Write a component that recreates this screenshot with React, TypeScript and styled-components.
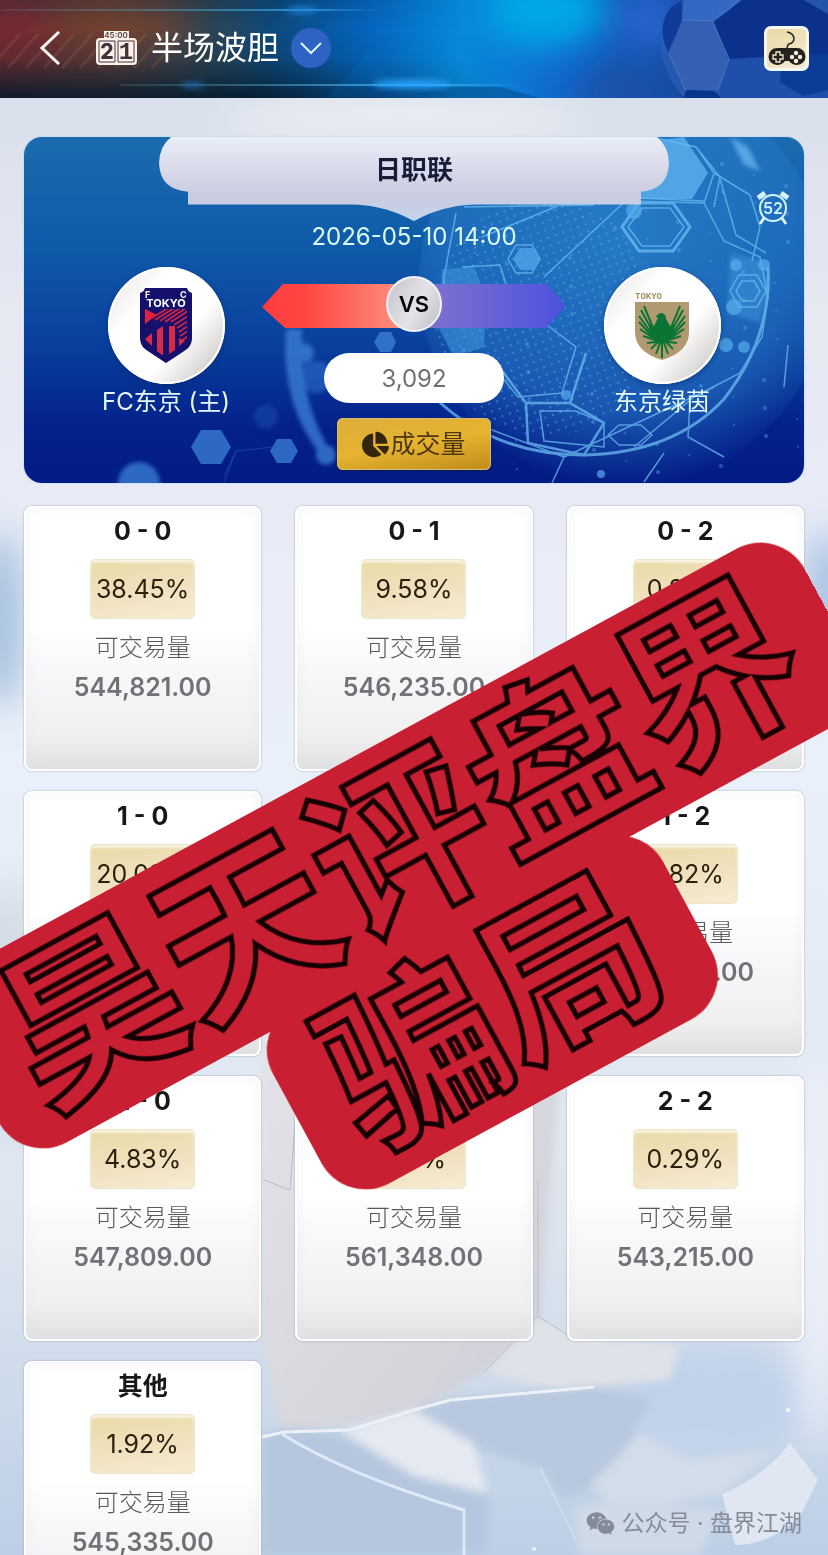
import React from "react";
import styled, { createGlobalStyle } from "styled-components";
import { FaChartPie, FaWeixin } from "react-icons/fa";

const GlobalStyle = createGlobalStyle`
  * { box-sizing: border-box; }
  body {
    margin: 0;
    font-family: Inter, "Noto Sans CJK SC", sans-serif;
    color: #17181c;
  }
  button { font-family: inherit; border: 0; padding: 0; margin: 0; cursor: pointer; }
`;

const Screen = styled.div`
  position: relative;
  display: flex;
  flex-direction: column;
  height: 100vh;
  overflow: hidden;
  background: #e3e9f4;
`;

const Backdrop = styled.svg`
  position: absolute;
  inset: 0;
  width: 100%;
  height: 100%;
`;

const Header = styled.header`
  position: relative;
  flex: none;
  height: 98px;
  background: linear-gradient(90deg, #6b2c30 0%, #5d3f3a 14%, #35454f 24%, #0d4a7d 33%, #0564bd 44%, #088bdb 56%, #1268cc 68%, #14479f 84%, #0b3a8c 100%);
`;

const HeaderRow = styled.div`
  position: relative;
  display: flex;
  align-items: center;
  height: 96px;
  padding: 0 19px 0 39px;
`;

const BackButton = styled.button`
  display: flex;
  margin-right: 35px;
  background: none;
`;

const Title = styled.h1`
  margin: 0 12px 0 14px;
  color: #fff;
  font-size: 32px;
  line-height: 40px;
  font-weight: 400;
`;

const DropButton = styled.button`
  display: flex;
  align-items: center;
  justify-content: center;
  width: 40px;
  height: 40px;
  border-radius: 50%;
  background: #2f63c3;
`;

const GameButton = styled.button`
  display: flex;
  margin-left: auto;
  width: 45px;
  height: 45px;
  border: 3px solid #f3f8f4;
  border-radius: 7px;
  background: linear-gradient(150deg, #ead9a6, #f5ecd2);
`;

const Main = styled.main`
  position: relative;
  flex: 1;
  min-height: 0;
  overflow-y: auto;
  scrollbar-width: none;
  padding: 39px 24px 24px;
`;

const Hero = styled.section`
  position: relative;
  height: 346px;
  border-radius: 18px;
  overflow: hidden;
  background: linear-gradient(180deg, #1b6bae 0%, #0f5aa9 32%, #093f9d 60%, #04218b 84%, #021b84 100%);
  box-shadow: 0 0 2px #9ccdf5;
`;

const Banner = styled.div`
  position: relative;
  display: flex;
  justify-content: center;
  width: 510px;
  max-width: 100%;
  height: 84px;
  margin: 0 auto;
`;

const League = styled.h2`
  position: relative;
  margin: 0;
  padding-top: 13px;
  font-size: 26px;
  line-height: 40px;
  font-weight: 700;
  color: #171d38;
`;

const Kickoff = styled.time`
  position: relative;
  display: block;
  text-align: center;
  font-size: 24px;
  line-height: 32px;
  color: #d9fbff;
`;

const Timer = styled.svg`
  position: absolute;
  top: 52px;
  right: 14px;
`;

const Match = styled.div`
  position: relative;
  display: grid;
  grid-template-columns: 192px 1fr 192px;
  padding: 14px 46px 0;
`;

const Team = styled.div`
  display: flex;
  flex-direction: column;
  align-items: center;
`;

const Crest = styled.div`
  display: flex;
  justify-content: center;
  align-items: center;
  width: 117px;
  height: 117px;
  border-radius: 50%;
  background: linear-gradient(130deg, #e9e8e6 8%, #fff 30%, #fff 62%, #d8d5d2 85%, #fff 100%);
  box-shadow: inset 0 0 0 2px #fff, 0 2px 6px #062a6b88;
`;

const TeamName = styled.div`
  font-size: 24px;
  line-height: 36px;
  color: #e6fbff;
  white-space: nowrap;
`;

const Centre = styled.div`
  display: flex;
  flex-direction: column;
  align-items: center;
`;

const Versus = styled.div`
  position: relative;
  display: flex;
  justify-content: center;
  align-items: center;
  width: 100%;
  height: 56px;
  margin-top: 9px;
`;

const Arrows = styled.svg`
  position: absolute;
  inset: 8px 0 auto;
  width: 100%;
  height: 44px;
`;

const VersusDisc = styled.div`
  position: relative;
  width: 56px;
  height: 56px;
  border: 2px solid #f3f3f8;
  border-radius: 50%;
  background: linear-gradient(120deg, #c5c4ca, #e4e3e8 55%, #bebdc8);
  font-size: 22px;
  line-height: 52px;
  font-weight: 600;
  text-align: center;
  color: #050505;
`;

const Total = styled.output`
  width: 180px;
  height: 50px;
  margin-top: 21px;
  border-radius: 25px;
  background: #fff;
  font-size: 24px;
  line-height: 52px;
  text-align: center;
  color: #6f7176;
`;

const VolumeButton = styled.button`
  display: flex;
  align-items: center;
  justify-content: center;
  gap: 1px;
  width: 154px;
  height: 52px;
  margin-top: 15px;
  border-radius: 6px;
  background: linear-gradient(170deg, #dcae3c, #e6b32f 50%, #c08b1a);
  box-shadow: inset 0 0 0 1px #d9bb70, 0 1px 3px #031a5a;
  font-size: 25px;
  line-height: 36px;
  color: #4c3613;
`;

const Grid = styled.div`
  display: grid;
  grid-template-columns: repeat(3, 1fr);
  column-gap: 34px;
  row-gap: 20px;
  margin-top: 23px;
`;

const Card = styled.article`
  display: flex;
  flex-direction: column;
  align-items: center;
  height: 265px;
  padding-top: 6px;
  border: 2px solid #fff;
  border-radius: 8px;
  background: linear-gradient(180deg, #fff 0%, #fff 45%, #f8f7f9 62%, #efeff0 88%, #e0e0e2 100%);
  box-shadow: 0 0 2px #8d97a8, inset 0 0 12px #dfe3e966;
`;

const Score = styled.h3`
  margin: 0;
  font-size: 25px;
  line-height: 34px;
  font-weight: 700;
  color: #17181b;
`;

const Rate = styled.button`
  width: 105px;
  height: 60px;
  margin-top: 11px;
  border: 1px solid #ece4cd;
  border-radius: 5px;
  background: linear-gradient(170deg, #eadba9 5%, #f0e1bd 50%, #f6ead0 95%);
  box-shadow: inset 0 3px 2px #f8f1de;
  font-size: 25px;
  line-height: 56px;
  color: #2c210c;
`;

const Caption = styled.div`
  margin-top: 11px;
  font-size: 24px;
  line-height: 36px;
  font-weight: 300;
  color: #58595d;
`;

const Amount = styled.div`
  margin-top: 9px;
  font-size: 25px;
  line-height: 24px;
  font-weight: 600;
  color: #717277;
`;

const Stamp = styled.div`
  position: absolute;
  left: 54%;
  top: 929px;
  display: flex;
  flex-direction: column;
  align-items: center;
  transform: translate(-50%, -50%) rotate(-28.5deg);
  pointer-events: none;
`;

const StampLine = styled.div`
  height: 202px;
  padding: 0 46px;
  border-radius: 50px;
  background: #c91f32;
  color: #c91f32;
  font-family: "Noto Sans CJK SC", sans-serif;
  font-size: 176px;
  line-height: 174px;
  font-weight: 700;
  white-space: nowrap;
  -webkit-text-stroke: 5px #160003;

  & + & { margin-top: -12px; }
`;

const Credit = styled.div`
  position: absolute;
  right: 26px;
  bottom: 16px;
  display: flex;
  align-items: center;
  gap: 6px;
  font-size: 23px;
  line-height: 32px;
  color: #858b98;
`;

const cards = [
  { score: "0 - 0", rate: "38.45%", amount: "544,821.00" },
  { score: "0 - 1", rate: "9.58%", amount: "546,235.00" },
  { score: "0 - 2", rate: "0.82%", amount: "543,215.00" },
  { score: "1 - 0", rate: "20.09%", amount: "545,335.00" },
  { score: "1 - 1", rate: "6.21%", amount: "546,235.00" },
  { score: "1 - 2", rate: "0.82%", amount: "543,215.00" },
  { score: "2 - 0", rate: "4.83%", amount: "547,809.00" },
  { score: "2 - 1", rate: "1.17%", amount: "561,348.00" },
  { score: "2 - 2", rate: "0.29%", amount: "543,215.00" },
  { score: "其他", rate: "1.92%", amount: "545,335.00" },
];

function PageArt() {
  return (
    <Backdrop viewBox="0 0 828 1555" preserveAspectRatio="xMidYMid slice" aria-hidden="true">
      <defs>
        <linearGradient id="sky" x1="0" y1="0" x2="0" y2="1">
          <stop offset="0" stopColor="#d3dce8" />
          <stop offset=".2" stopColor="#e6e8f2" />
          <stop offset=".5" stopColor="#eaf0fa" />
          <stop offset=".8" stopColor="#dce4ef" />
          <stop offset="1" stopColor="#bccfe6" />
        </linearGradient>
        <linearGradient id="shard" x1="0" y1="0" x2="1" y2="1">
          <stop offset="0" stopColor="#e4e3e8" />
          <stop offset="1" stopColor="#cdced6" />
        </linearGradient>
        <filter id="soft"><feGaussianBlur stdDeviation="18" /></filter>
        <filter id="edge"><feGaussianBlur stdDeviation="4" /></filter>
      </defs>
      <rect width="828" height="1555" fill="url(#sky)" />
      <g filter="url(#soft)">
        <ellipse cx="0" cy="620" rx="22" ry="90" fill="#9dbcda" />
        <ellipse cx="828" cy="590" rx="22" ry="60" fill="#a3bde0" />
        <ellipse cx="400" cy="118" rx="180" ry="16" fill="#eef1f6" />
        <ellipse cx="700" cy="1400" rx="130" ry="50" fill="#bfd2ea" />
        <ellipse cx="10" cy="1010" rx="30" ry="130" fill="#d2d9e3" />
        <ellipse cx="818" cy="1250" rx="20" ry="200" fill="#f1f3fa" />
      </g>
      <g filter="url(#edge)">
        <path d="M260 1030 L296 1090 L560 1070 L540 1320 L484 1372 L414 1412 L282 1434 L262 1340Z" fill="url(#shard)" />
        <path d="M262 1436 L284 1428 L340 1434 L414 1470 L490 1494 L485 1555 L262 1555Z" fill="#b4c7de" />
        <path d="M538 1316 L568 1335 L680 1345 L670 1380 L560 1390 L486 1372Z" fill="#dfe2e8" />
        <path d="M414 1410 L450 1398 L594 1386 L652 1400 L620 1460 L590 1490 L560 1500 L544 1470 L480 1450 L414 1428Z" fill="#b8c9df" />
        <path d="M340 1432 L414 1410 L474 1444 L488 1494 L414 1476Z" fill="#e5e9f2" />
        <path d="M590 1485 L640 1434 L690 1460 L775 1450 L720 1494 L620 1510Z" fill="#d3dde9" />
        <path d="M574 1508 L625 1500 L720 1510 L700 1555 L580 1555Z" fill="#d0dae7" />
      </g>
      <path d="M722 1494 Q765 1476 790 1443 L818 1480 L800 1516 Q770 1545 735 1545Z" fill="#e1e7f2" />
      <path d="M262 1437 L284 1432 L350 1430 L414 1410 L450 1400 L594 1387" fill="none" stroke="#ecf1f7" strokeWidth="3" />
      <path d="M282 1434 Q345 1474 464 1510 V1555" fill="none" stroke="#dfeaf6" strokeWidth="3" />
      <path d="M538 1180 V1316 L568 1335 M538 1316 L484 1372 M264 1180 L290 1190 L296 1110" fill="none" stroke="#b9bdca" strokeWidth="1" />
      <path d="M540 1468 L560 1508 L576 1540" fill="none" stroke="#cddcec" strokeWidth="2" />
      <circle cx="788" cy="1410" r="2" fill="#f1f8ff" />
      <circle cx="534" cy="1549" r="2" fill="#e8f3ff" />
    </Backdrop>
  );
}

function HeaderArt() {
  return (
    <Backdrop viewBox="0 0 828 98" preserveAspectRatio="xMaxYMid slice" aria-hidden="true">
      <defs>
        <linearGradient id="hshade" x1="0" y1="0" x2="0" y2="1">
          <stop offset="0" stopColor="#031c38" stopOpacity=".2" />
          <stop offset=".3" stopColor="#031c38" stopOpacity="0" />
          <stop offset=".6" stopColor="#061c30" stopOpacity=".15" />
          <stop offset="1" stopColor="#061a2c" stopOpacity=".9" />
        </linearGradient>
        <linearGradient id="fadeR"><stop offset="0" stopColor="#fff" /><stop offset=".5" stopColor="#fff" /><stop offset="1" stopColor="#000" /></linearGradient>
        <mask id="hmask"><rect width="500" height="98" fill="url(#fadeR)" /></mask>
        <linearGradient id="beam"><stop offset="0" stopColor="#5fa5a6" stopOpacity=".2" /><stop offset=".8" stopColor="#39a8ef" /><stop offset="1" stopColor="#39a8ef" stopOpacity="0" /></linearGradient>
        <filter id="hb" x="-30%" y="-60%" width="160%" height="220%"><feGaussianBlur stdDeviation="16" /></filter>
        <filter id="hs" x="-20%" y="-200%" width="140%" height="500%"><feGaussianBlur stdDeviation="3" /></filter>
      </defs>
      <g filter="url(#hb)">
        <ellipse cx="20" cy="30" rx="40" ry="20" fill="#8b2832" opacity=".6" />
        <ellipse cx="120" cy="22" rx="70" ry="18" fill="#80442c" opacity=".8" />
        <ellipse cx="545" cy="10" rx="60" ry="38" fill="#00a8e6" />
        <ellipse cx="650" cy="20" rx="30" ry="26" fill="#2a66d0" />
        <path d="M560 104 L620 64 L690 104Z" fill="#1a4fa2" />
      </g>
      <rect width="500" height="98" fill="url(#hshade)" mask="url(#hmask)" />
      <g stroke="#b16f55" strokeWidth="3" opacity=".2">
        {[0, 18, 36, 54, 72, 90, 108, 126, 144, 162].map((x) => (
          <path key={x} d={`M${x - 10} 68 L${x + 20} 34`} />
        ))}
      </g>
      <path d="M370 50 L328 97 L540 97 L500 86 L392 84Z" fill="#0b83ce" opacity=".12" />
      <path d="M340 87 H500 L540 98 H340Z" fill="#073a70" opacity=".4" />
      <rect y="9" width="384" height="2" fill="url(#beam)" opacity=".7" />
      <rect x="120" y="84" width="400" height="2" fill="url(#beam)" opacity=".9" />
      <g filter="url(#hs)">
        <ellipse cx="302" cy="10" rx="16" ry="3" fill="#2486d8" />
        <ellipse cx="193" cy="85" rx="12" ry="2" fill="#1b76c8" />
        <ellipse cx="412" cy="84" rx="40" ry="4" fill="#2aa4ff" />
      </g>
      <path d="M662 30 Q672 6 684 -6 H828 V98 H684 Q655 64 662 30Z" fill="#2a5bb2" opacity=".8" />
      <path d="M682 0 L682 22 L668 52 Q656 28 670 8Z" fill="#103b98" />
      <path d="M684 0 H746 L712 21 L682 20Z" fill="#3568c4" />
      <path d="M682 20 L712 21 L728 60 L718 90 L686 91 L669 54Z" fill="#355fb2" />
      <path d="M714 22 L744 -2 L800 -2 L828 14 V54 L776 58 L729 59Z" fill="#0b318c" />
      <path d="M686 90 L714 91 L722 98 H684Z" fill="#08348b" />
      <path d="M729 59 L782 56 L828 66 V98 H722 L718 90Z" fill="#1f4fa8" />
      <path d="M782 56 L828 54 V90 L804 96 L780 82Z" fill="#0c3b98" />
      <path d="M682 20 L712 21 L729 59 L718 90 M712 21 L738 1 M669 54 L686 91" fill="none" stroke="#4b78c0" strokeWidth="1" />
    </Backdrop>
  );
}

function hex(cx: number, cy: number, r: number, k = 1) {
  return [0, 1, 2, 3, 4, 5]
    .map((i) => `${Math.round(cx + r * Math.cos((i * Math.PI) / 3))},${Math.round(cy + k * r * Math.sin((i * Math.PI) / 3))}`)
    .join(" ");
}

function HeroArt() {
  return (
    <Backdrop viewBox="0 0 780 346" preserveAspectRatio="xMaxYMid slice" aria-hidden="true">
      <defs>
        <pattern id="dots" width="8" height="8" patternUnits="userSpaceOnUse" patternTransform="rotate(-20)">
          <circle cx="2" cy="2" r="1" fill="#6ab9f6" />
        </pattern>
        <radialGradient id="ball" cx=".5" cy=".4" r=".6">
          <stop offset="0" stopColor="#2d84cd" stopOpacity=".75" />
          <stop offset=".7" stopColor="#2675c6" stopOpacity=".6" />
          <stop offset="1" stopColor="#2675c6" stopOpacity="0" />
        </radialGradient>
        <filter id="glow"><feGaussianBlur stdDeviation="2" /></filter>
      </defs>
      <circle cx="600" cy="145" r="205" fill="url(#ball)" />
      <ellipse cx="520" cy="180" rx="110" ry="120" fill="url(#dots)" opacity=".55" />
      <path d="M630 4 L660 0 L684 36 L668 62 L606 62 Q640 30 630 4Z" fill="#5eb0ec" opacity=".8" />
      <path d="M706 0 L724 10 L736 34 L720 28Z" fill="#6ebcf2" opacity=".7" filter="url(#glow)" />
      <path d="M418 132 L450 130 L462 160 L460 210 L430 220 L414 190Z" fill="#4197df" opacity=".55" />
      <path d="M706 116 L740 124 L746 150 L736 186 L704 176Z" fill="#4ea5e8" opacity=".4" filter="url(#glow)" />
      <g fill="none" stroke="#6cbcf2" strokeWidth="1.5" opacity=".75">
        <path d="M628 0 L672 10 L690 36 L680 66 L606 64 M672 10 L696 40 L690 70 M690 36 L726 58 L736 90 L728 124" />
        <path d="M680 66 L700 104 L736 120 L744 160 L738 200 L716 236 L670 260 L610 310 M696 42 L712 98 L742 116" />
        <path d="M590 60 L680 64 M606 64 L536 68 L458 100 M610 56 L520 140 M440 70 L570 68" />
        <path d="M438 130 L476 128 L486 160 L552 210 L538 256 L494 260 L462 220 M432 76 L420 140 L418 190" />
        <path d="M468 220 L502 266 L546 266 L562 216 M502 266 L504 306 L560 318 L580 286 L546 266" strokeWidth="2.5" />
        <path d="M516 274 L552 274 L580 286 L580 310 L520 304Z" />
        <path d="M410 260 Q470 318 560 318 Q650 316 700 262 Q748 200 744 130" strokeWidth="3" />
        <path d="M460 290 L540 320 L528 346 M620 345 L640 316 M540 320 L690 250 M666 264 L664 300 L700 320 M764 208 L760 250" />
        <polygon points={hex(632, 90, 34, 0.8)} strokeWidth="3" />
        <polygon points={hex(632, 90, 28, 0.8)} />
        <polygon points={hex(724, 154, 18, 1)} />
        <polygon points={hex(724, 154, 12, 1)} />
        <polygon points={hex(606, 298, 22, 0.5)} />
        <polygon points={hex(500, 122, 16)} />
      </g>
      <g fill="#58abed" opacity=".7">
        <polygon points={hex(502, 122, 13)} />
        <circle cx="712" cy="128" r="6" /><circle cx="740" cy="128" r="6" /><circle cx="710" cy="170" r="8" />
        <circle cx="702" cy="208" r="7" /><circle cx="720" cy="210" r="6" /><circle cx="610" cy="74" r="8" />
        <circle cx="577" cy="337" r="4" /><circle cx="542" cy="258" r="5" />
      </g>
      <g fill="#5fb2f0" opacity=".4">
        {Array.from({ length: 90 }, (_, i) => (
          <circle key={i} cx={430 + ((i * 97) % 345)} cy={8 + ((i * 61) % 330)} r={1 + (i % 2)} />
        ))}
      </g>
      <g fill="#3d82da" opacity=".75">
        <polygon points={hex(187, 310, 20)} />
        <polygon points={hex(260, 314, 14)} />
        <polygon points={hex(361, 205, 11)} />
        <g filter="url(#glow)">
          <circle cx="115" cy="346" r="21" />
          <circle cx="302" cy="318" r="10" />
          <circle cx="292" cy="240" r="16" opacity=".6" />
          <circle cx="280" cy="216" r="10" />
          <circle cx="242" cy="280" r="12" opacity=".3" />
          <path d="M262 192 Q256 270 300 322 L306 314 Q274 260 278 192Z" />
        </g>
      </g>
      <path d="M200 340 L212 314 L250 310 M212 314 L200 346" stroke="#2563b7" fill="none" opacity=".5" />
    </Backdrop>
  );
}

function ScoreboardIcon() {
  return (
    <svg width="41" height="34" viewBox="0 0 41 34" aria-hidden="true">
      <path d="M8 0 H33 V7 H37 Q41 7 41 11 V30 Q41 34 37 34 H4 Q0 34 0 30 V11 Q0 7 4 7 H8Z" fill="#fdf1ea" />
      <path d="M3 10 H19 V31 H3Z M22 10 H38 V31 H22Z" fill="none" stroke="#40343a" strokeWidth="1" />
      <text x="20" y="7" textAnchor="middle" fontFamily="Inter, sans-serif" fontSize="8" fontWeight="600" fill="#544142">45:00</text>
      <text x="11" y="28" textAnchor="middle" fontFamily="Inter, sans-serif" fontSize="21" fontWeight="800" fill="#40343a">2</text>
      <text x="30" y="28" textAnchor="middle" fontFamily="Liberation Mono, monospace" fontSize="24" fontWeight="700" fill="#40343a">1</text>
    </svg>
  );
}

function GamepadIcon() {
  return (
    <svg width="39" height="39" viewBox="0 0 39 39" aria-hidden="true">
      <path d="M20 3 Q26 4 27 9 Q27 14 22 15 Q20 16 20 21" fill="none" stroke="#2a2520" strokeWidth="1.5" />
      <path d="M10 19 H30 A8 8 0 0 1 30 36 Q25 36 22 32 H18 Q15 36 10 36 A8 8 0 0 1 10 19Z" fill="#25211f" />
      <path d="M9 23 H13 V26 H16 V30 H13 V33 H9 V30 H6 V26 H9Z" fill="#25211f" stroke="#f0e8cf" strokeWidth="1.3" />
      <g fill="#f5efdc"><circle cx="29" cy="24" r="2.2" /><circle cx="29" cy="32" r="2.2" /><circle cx="25" cy="28" r="2.2" /><circle cx="33" cy="28" r="2.2" /></g>
    </svg>
  );
}

function TokyoCrest() {
  return (
    <svg width="52" height="75" viewBox="0 0 52 75" role="img" aria-label="FC东京">
      <clipPath id="inner"><path d="M5 21 H47 V54 L26 70 L5 54Z" /></clipPath>
      <path d="M5 0 H47 Q48 4 52 5 V50 Q52 57 47 61 Q40 66 26 75 Q12 66 5 61 Q0 57 0 50 V5 Q4 4 5 0Z" fill="#15106b" />
      <g clipPath="url(#inner)">
        <path d="M5 21 L17 27 L5 36Z" fill="#e3203f" />
        <g stroke="#c42545" strokeWidth="2">
          <path d="M12 30 L28 20 M15 32 L34 20 M20 33 L40 20 M25 34 L46 20 M31 34 L48 23 M34 37 L48 28 M37 40 L48 33 M39 44 L48 38 M40 48 L48 43 M41 53 L48 48" />
        </g>
        <path d="M17 42 L23 38 V68 L17 64Z M29 38 H35 V62 L29 66Z M5 51 L12 45 V58Z M39 50 L45 53 L39 58Z" fill="#d62a45" />
      </g>
      <g fill="#fff" fontFamily="Inter, sans-serif" fontWeight="700" fontSize="9">
        <text x="5" y="10">F</text>
        <text x="40" y="10">C</text>
        <text x="26" y="19" textAnchor="middle" fontSize="11">TOKYO</text>
      </g>
    </svg>
  );
}

function VerdyCrest() {
  const feathers = [
    "M19 28 L9 4", "M18 30 L6 8", "M17 32 L4 14", "M17 34 L4 20", "M18 36 L5 27", "M20 38 L8 34", "M21 40 L12 41", "M23 40 L16 47", "M25 41 L21 52",
  ];
  return (
    <svg width="54" height="70" viewBox="0 0 54 70" role="img" aria-label="东京绿茵">
      <text x="0" y="8" fontFamily="Liberation Mono, monospace" fontSize="9" fontWeight="700" fill="#a78f64">TOKYO</text>
      <g transform="translate(0 11)">
        <path d="M0 0 H54 V30 Q54 50 27 58 Q0 50 0 30Z" fill="#b29a70" />
        <path d="M21 15 Q23 11 27 11 Q31 12 31 17 L35 24 L39 22 L40 32 L33 40 L27 42 L21 40 L14 32 L15 22 L19 24 L23 16Z" fill="#0b7434" />
        <g stroke="#0b7434" strokeWidth="2" fill="none">
          {feathers.map((d) => (
            <React.Fragment key={d}>
              <path d={d} />
              <path d={d} transform="translate(54 0) scale(-1 1)" />
            </React.Fragment>
          ))}
          <path d="M27 40 V56" />
        </g>
      </g>
    </svg>
  );
}

export default function App() {
  return (
    <Screen>
      <GlobalStyle />
      <PageArt />
      <Header>
        <HeaderArt />
        <HeaderRow>
          <BackButton aria-label="返回">
            <svg width="22" height="34" viewBox="0 0 22 34" fill="none" stroke="#fff4ee" strokeWidth="3">
              <path d="M20 1 L3 17 L20 33" />
            </svg>
          </BackButton>
          <ScoreboardIcon />
          <Title>半场波胆</Title>
          <DropButton aria-label="切换玩法">
            <svg width="22" height="14" viewBox="0 0 22 14" fill="none" stroke="#d9fbff" strokeWidth="2">
              <path d="M1 2 L11 12 L21 2" />
            </svg>
          </DropButton>
          <GameButton aria-label="游戏">
            <GamepadIcon />
          </GameButton>
        </HeaderRow>
      </Header>
      <Main>
        <Hero>
          <HeroArt />
          <Banner>
            <Backdrop viewBox="0 0 510 86" preserveAspectRatio="none" aria-hidden="true">
              <defs>
                <linearGradient id="plate" x1="0" y1="0" x2="0" y2="1">
                  <stop offset="0" stopColor="#e9eef8" />
                  <stop offset=".3" stopColor="#dddeed" />
                  <stop offset=".7" stopColor="#c9cbdf" />
                  <stop offset="1" stopColor="#c3d5ee" />
                </linearGradient>
              </defs>
              <path d="M12 0 H498 Q510 10 510 27 Q509 54 482 56 V69 H322 C290 69 272 77 255 86 C238 77 220 69 188 69 H29 V56 Q1 54 0 27 Q0 10 12 0Z" fill="url(#plate)" />
            </Backdrop>
            <League>日职联</League>
          </Banner>
          <Kickoff dateTime="2026-05-10T14:00">2026-05-10 14:00</Kickoff>
          <Timer width="34" height="36" viewBox="0 0 34 36" role="img" aria-label="52">
            <g fill="none" stroke="#d5f2ff" strokeWidth="2">
              <circle cx="17" cy="19" r="13" />
              <path d="M8 29 L4 35 M26 29 L30 35" strokeWidth="3" />
              <path d="M2 9 L9 4 M25 4 L32 9" strokeWidth="5" />
            </g>
            <text x="17" y="25" textAnchor="middle" fontFamily="Inter, sans-serif" fontSize="16" fontWeight="600" fill="#d5f2ff">52</text>
          </Timer>
          <Match>
            <Team>
              <Crest><TokyoCrest /></Crest>
              <TeamName>FC东京 (主)</TeamName>
            </Team>
            <Centre>
              <Versus>
                <Arrows viewBox="0 0 304 44" preserveAspectRatio="none" aria-hidden="true">
                  <defs>
                    <linearGradient id="red"><stop offset="0" stopColor="#fd3b3f" /><stop offset=".3" stopColor="#ff4742" /><stop offset="1" stopColor="#fb9383" /></linearGradient>
                    <linearGradient id="violet"><stop offset="0" stopColor="#8174cf" /><stop offset="1" stopColor="#4c50dd" /></linearGradient>
                  </defs>
                  <path d="M0 23 L21 0 H145 V44 H23Z" fill="url(#red)" />
                  <path d="M160 0 H285 L304 22 L284 44 H160Z" fill="url(#violet)" />
                </Arrows>
                <VersusDisc>VS</VersusDisc>
              </Versus>
              <Total>3,092</Total>
              <VolumeButton>
                <FaChartPie size={27} color="#33260f" />
                成交量
              </VolumeButton>
            </Centre>
            <Team>
              <Crest><VerdyCrest /></Crest>
              <TeamName>东京绿茵</TeamName>
            </Team>
          </Match>
        </Hero>
        <Grid>
          {cards.map((c) => (
            <Card key={c.score}>
              <Score>{c.score}</Score>
              <Rate>{c.rate}</Rate>
              <Caption>可交易量</Caption>
              <Amount>{c.amount}</Amount>
            </Card>
          ))}
        </Grid>
      </Main>
      <Stamp>
        <StampLine>昊天评盘界</StampLine>
        <StampLine>骗局</StampLine>
      </Stamp>
      <Credit>
        <FaWeixin size={29} />
        公众号 · 盘界江湖
      </Credit>
    </Screen>
  );
}
